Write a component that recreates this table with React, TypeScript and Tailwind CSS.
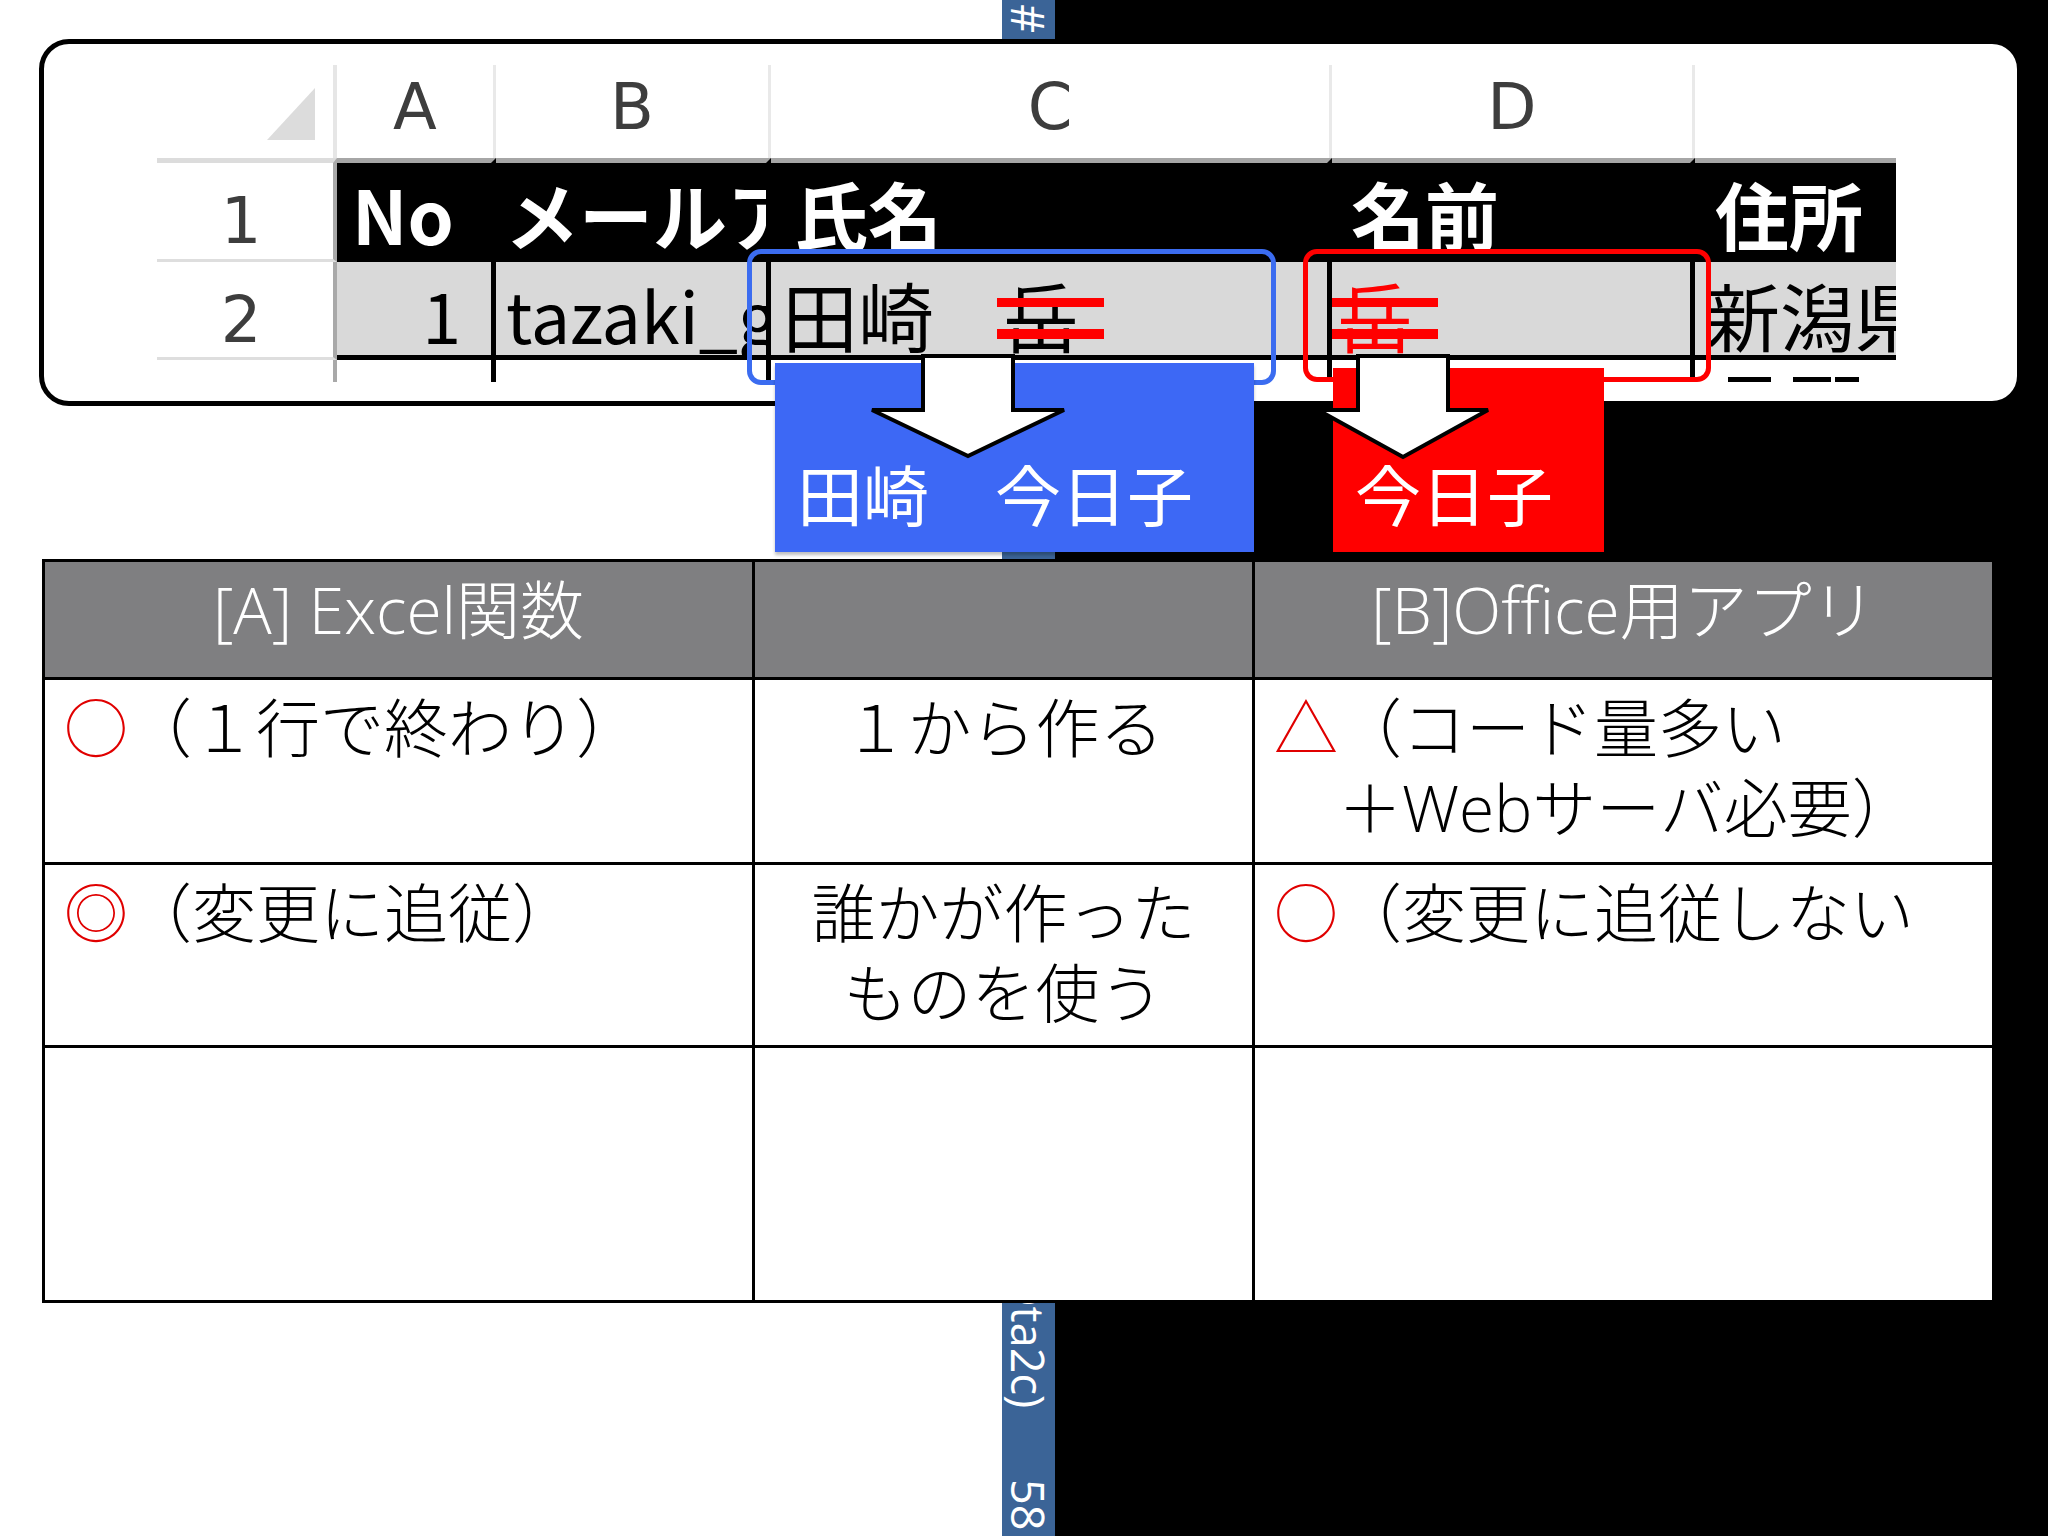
import React from 'react';

// Spreadsheet column widths (px), left to right: row header, A, B, C, D, E
const W = { rh: 'w-[180px]', a: 'w-[159px]', b: 'w-[275px]', c: 'w-[561px]', d: 'w-[363px]', e: 'w-[201px]' };

function ColLetter({ w, label, last }: { w: string; label: string; last?: boolean }) {
  return (
    <div
      className={`flex ${w} items-center justify-center pb-[10px] font-['DejaVu_Sans',sans-serif] text-[64px] leading-none text-[#3d3d3d] ${
        last ? '' : 'border-r-[3px] border-[#e9e9e9]'
      }`}
    >
      {label}
    </div>
  );
}

function StruckGaku({ red }: { red?: boolean }) {
  return (
    <span className={`relative inline-block leading-none ${red ? 'text-[#ff0000]' : 'text-black'}`}>
      岳
      <span className="absolute left-[-6px] top-[22px] h-[9px] w-[107px] bg-[#ff0000]" />
      <span className="absolute left-[-6px] top-[53px] h-[10px] w-[107px] bg-[#ff0000]" />
    </span>
  );
}

function Spreadsheet() {
  const headCell = 'flex items-center overflow-hidden whitespace-nowrap border-t-[5px] border-t-[#a6a6a6] bg-black font-bold text-white text-[74px] leading-none';
  const dataCell = 'flex items-center overflow-hidden whitespace-nowrap border-b-[5px] border-b-black bg-[#d9d9d9] pt-[10px] text-black text-[70px] leading-none';
  const rowHead = 'flex items-center justify-center border-r-4 border-r-[#a9a9a9] pt-[20px] pr-[8px] font-[\'DejaVu_Sans\',sans-serif] text-[64px] leading-none text-[#3d3d3d]';

  return (
    <div className="flex flex-col pl-[113px] pt-[21px] font-['Noto_Sans_CJK_JP',sans-serif]">
      {/* column letters */}
      <div className="flex h-[93px]">
        <div className={`flex ${W.rh} items-end justify-end border-r-4 border-[#e6e6e6] pb-[18px] pr-[18px]`}>
          <svg width="48" height="52" viewBox="0 0 48 52">
            <polygon points="48,0 48,52 0,52" fill="#dcdcdc" />
          </svg>
        </div>
        <ColLetter w={W.a} label="A" />
        <ColLetter w={W.b} label="B" />
        <ColLetter w={W.c} label="C" />
        <ColLetter w={W.d} label="D" />
        <ColLetter w={W.e} label="" last />
      </div>

      {/* row 1 */}
      <div className="flex h-[104px]">
        <div className={`${rowHead} ${W.rh} border-t-[5px] border-t-[#dcdcdc] border-b-[3px] border-b-[#dedede]`}>1</div>
        <div className={`${headCell} ${W.a} border-r-[5px] border-r-black pl-[15px]`}>No</div>
        <div className={`${headCell} ${W.b} border-r-[5px] border-r-black pl-[9px] text-[68px]`}>メールアドレス</div>
        <div className={`${headCell} ${W.c} border-r-[5px] border-r-black pl-[23px]`}>氏名</div>
        <div className={`${headCell} ${W.d} border-r-[5px] border-r-black pl-[19px]`}>名前</div>
        <div className={`${headCell} ${W.e} pl-[20px]`}>住所</div>
      </div>

      {/* row 2 */}
      <div className="flex h-[98px]">
        <div className={`${rowHead} ${W.rh} border-b-[3px] border-b-[#dedede]`}>2</div>
        <div className={`${dataCell} ${W.a} justify-end border-r-[5px] border-r-black pr-[30px]`}>1</div>
        <div className={`${dataCell} ${W.b} border-r-[5px] border-r-black pl-[10px] text-[64px]`}>tazaki_gmail.com</div>
        <div className={`${dataCell} ${W.c} border-r-[5px] border-r-black pl-[11px] text-[76px]`}>
          <span>田崎</span>
          <span className="ml-[69px]">
            <StruckGaku />
          </span>
        </div>
        <div className={`${dataCell} ${W.d} border-r-[5px] border-r-black pl-[5px] text-[76px]`}>
          <StruckGaku red />
        </div>
        <div className={`${dataCell} ${W.e} pl-[11px] text-[74px]`}>新潟県</div>
      </div>

      {/* row 3 (cut off) */}
      <div className="flex h-[22px]">
        <div className={`${W.rh} border-r-4 border-r-[#a9a9a9]`} />
        <div className={`${W.a} border-r-[5px] border-r-black`} />
        <div className={`${W.b} border-r-[5px] border-r-black`} />
        <div className={`${W.c} border-r-[5px] border-r-black`} />
        <div className={`${W.d} border-r-[5px] border-r-black`} />
        <div className={`flex ${W.e} items-end pl-[33px]`}>
          <span className="h-[5px] w-[43px] bg-black" />
          <span className="ml-[22px] h-[5px] w-[38px] bg-black" />
          <span className="ml-[4px] h-[5px] w-[24px] bg-black" />
        </div>
      </div>
    </div>
  );
}

function Callouts() {
  return (
    <>
      {/* highlight frames */}
      <div className="absolute left-[747px] top-[249px] h-[136px] w-[529px] rounded-[14px] border-[5px] border-[#3b6cf0]" />
      <div className="absolute left-[1303px] top-[249px] h-[133px] w-[408px] rounded-[14px] border-[5px] border-[#ff0000]" />

      {/* result boxes */}
      <div className="absolute left-[775px] top-[363px] flex h-[189px] w-[479px] flex-col justify-end bg-[#3d68f5] pb-[24px] pl-[22px] shadow-[0_3px_3px_rgba(0,0,0,0.25)]">
        <span className="text-[66px] leading-none text-white">田崎　今日子</span>
      </div>
      <div className="absolute left-[1333px] top-[368px] flex h-[184px] w-[271px] flex-col justify-end bg-[#ff0000] pb-[24px] pl-[22px]">
        <span className="text-[66px] leading-none text-white">今日子</span>
      </div>

      {/* arrows */}
      <svg className="absolute left-[860px] top-[350px]" width="220" height="120" viewBox="0 0 220 120">
        <polygon points="63,6 63,60 12,60 108,106 204,60 153,60 153,6" fill="#fff" stroke="#000" strokeWidth="4" />
      </svg>
      <svg className="absolute left-[1300px] top-[350px]" width="220" height="120" viewBox="0 0 220 120">
        <polygon points="58,6 58,60 18,60 103,107 188,60 148,60 148,6" fill="#fff" stroke="#000" strokeWidth="4" />
      </svg>
    </>
  );
}

function Comparison() {
  const th = 'border-[3px] border-black bg-[#7f7f81] align-top pt-[8px] text-center text-[64px] font-light leading-[80px] text-white';
  const td = 'border-[3px] border-black bg-white align-top pt-[8px] text-[64px] font-light leading-[80px] text-black whitespace-nowrap';
  return (
    <table className="ml-[42px] mt-[153px] w-[1950px] table-fixed border-collapse">
      <colgroup>
        <col className="w-[710px]" />
        <col className="w-[500px]" />
        <col className="w-[740px]" />
      </colgroup>
      <tbody>
        <tr className="h-[118px]">
          <th className={th}>[A] Excel関数</th>
          <th className={th}></th>
          <th className={th}>[B]Office用アプリ</th>
        </tr>
        <tr className="h-[185px]">
          <td className={`${td} pl-[19px]`}>
            <span className="text-[#e00000]">○</span>（１行で終わり）
          </td>
          <td className={`${td} text-center`}>１から作る</td>
          <td className={`${td} pl-[19px]`}>
            <div>
              <span className="text-[#e00000]">△</span>（コード量多い
            </div>
            <div>　＋Webサーバ必要）</div>
          </td>
        </tr>
        <tr className="h-[183px]">
          <td className={`${td} pl-[19px]`}>
            <span className="text-[#e00000]">◎</span>（変更に追従）
          </td>
          <td className={`${td} text-center`}>
            <div>誰かが作った</div>
            <div>ものを使う</div>
          </td>
          <td className={`${td} pl-[19px]`}>
            <span className="text-[#e00000]">○</span>（変更に追従しない
          </td>
        </tr>
        <tr className="h-[255px]">
          <td className={td}></td>
          <td className={td}></td>
          <td className={td}></td>
        </tr>
      </tbody>
    </table>
  );
}

export default function App() {
  return (
    <div className="relative flex h-[1536px] w-[2048px] overflow-hidden font-['Open_Sans','Noto_Sans_CJK_JP',sans-serif]">
      {/* slide background: white page, footer strip, black margin */}
      <div className="w-[1002px] bg-white" />
      <div className="flex w-[53px] flex-col items-center bg-[#3b6497] pb-[6px] pt-[4px] text-[45px] leading-none text-white">
        <div className="[writing-mode:vertical-rl]">#</div>
        <div className="flex-1" />
        <div className="mb-[70px] [writing-mode:vertical-rl]">(@ta2c)</div>
        <div className="[writing-mode:vertical-rl]">58</div>
      </div>
      <div className="flex-1 bg-black" />

      {/* slide content */}
      <div className="absolute inset-0 flex flex-col">
        <div className="ml-[39px] mt-[39px] h-[367px] w-[1983px] overflow-hidden rounded-[30px] border-[5px] border-black bg-white">
          <Spreadsheet />
        </div>
        <Comparison />
        <Callouts />
      </div>
    </div>
  );
}
